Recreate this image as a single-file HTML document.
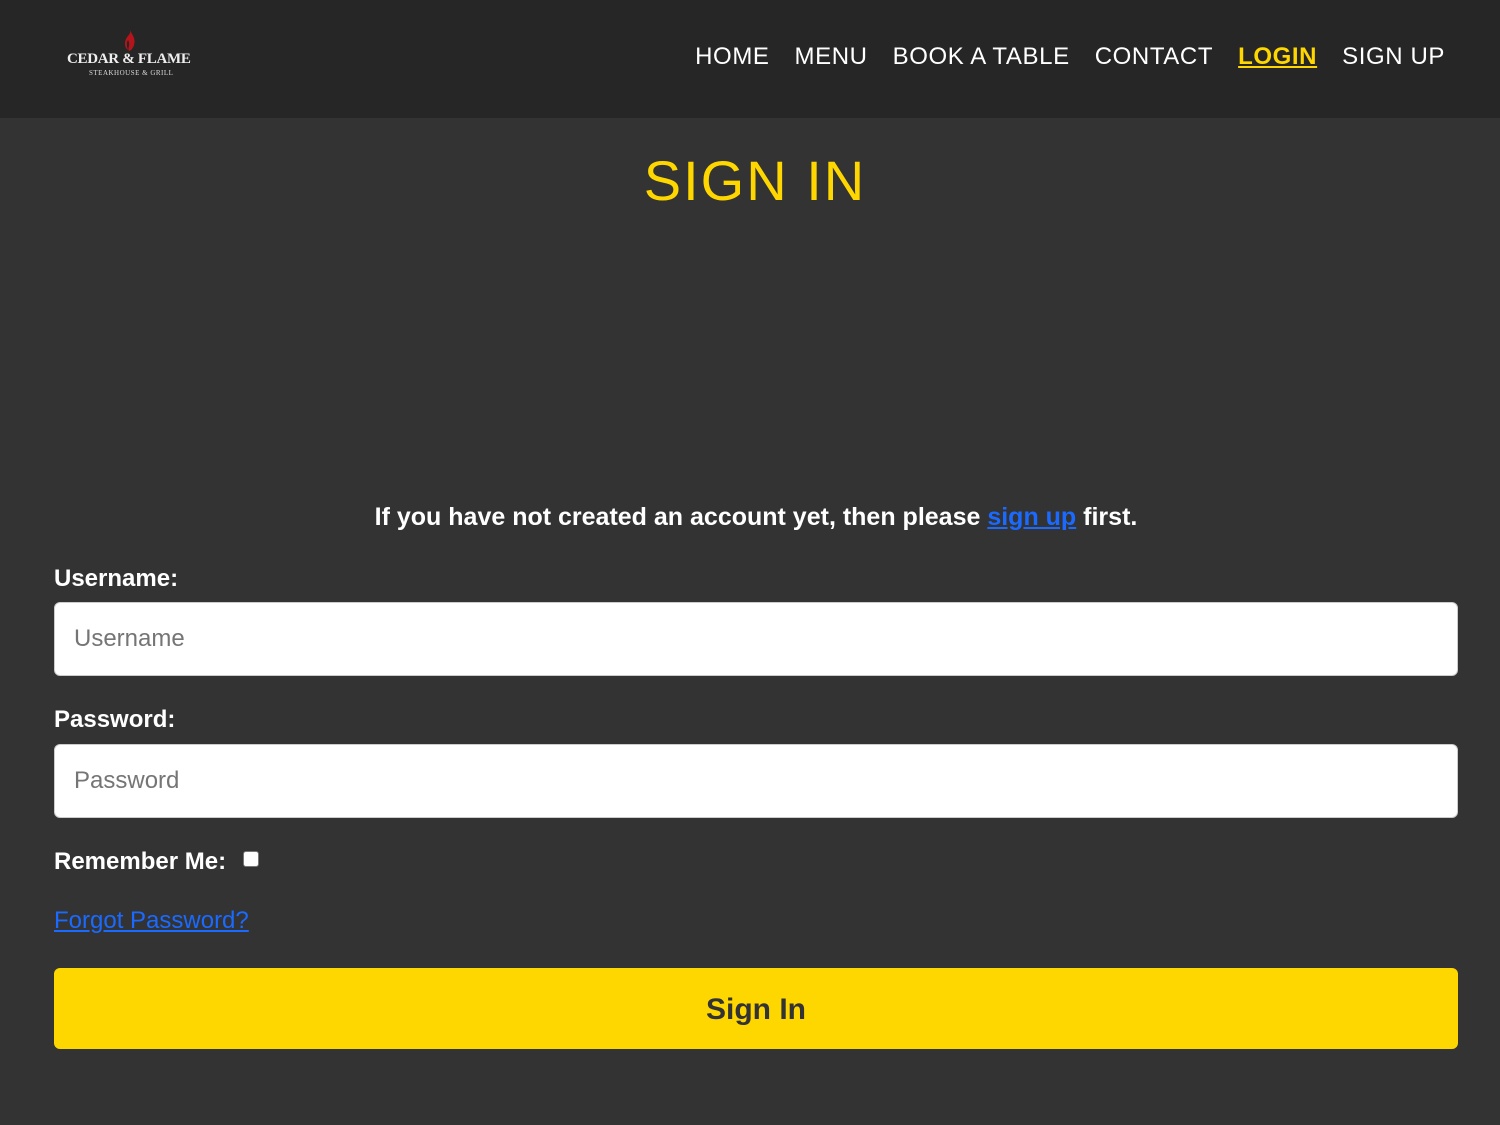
<!DOCTYPE html>
<html><head><style>
*{box-sizing:border-box;margin:0;padding:0}
body{width:1500px;height:1125px;background:#333;font-family:"Liberation Sans",sans-serif;color:#fff;position:relative;overflow:hidden}
.hdr{position:absolute;left:0;top:0;width:1500px;height:118px;background:#262626}
.nav{position:absolute;top:43px;right:55px;display:flex;gap:25px;font-size:24px;letter-spacing:0.6px}
.nav span{color:#fff}
.nav .act{color:#ffd700;text-decoration:underline;font-weight:bold}
.abs{position:absolute}
input.f{position:absolute;left:54px;width:1404px;height:74px;border:1px solid #ccc;border-radius:6px;background:#fff;font-size:24px;padding-left:19px;font-family:"Liberation Sans",sans-serif;color:#777}
.lbl{position:absolute;left:54px;font-size:24px;font-weight:bold}
</style></head><body>
<div class="hdr">
 <svg class="abs" style="left:122px;top:30px" width="16" height="22" viewBox="0 0 16 22"><path d="M8 0C10 5 14 8 12 15C11 19 8 21 7 21C5 18 9 15 6 10C4 13 5 17 6 20C3 18 2 14 4 9C6 5 9 4 8 0Z" fill="#b3151b"/></svg>
 <div class="abs" style="left:67px;top:51px;font-family:'Liberation Serif',serif;font-size:15px;font-weight:bold;color:#eee;letter-spacing:-0.3px">CEDAR &amp; FLAME</div>
 <div class="abs" style="left:89px;top:69px;font-family:'Liberation Serif',serif;font-size:7px;color:#ddd;letter-spacing:0.5px">STEAKHOUSE &amp; GRILL</div>
 <div class="nav"><span>HOME</span><span>MENU</span><span>BOOK A TABLE</span><span>CONTACT</span><span class="act">LOGIN</span><span>SIGN UP</span></div>
</div>
<div class="abs" style="left:0;width:1510px;top:148px;text-align:center;font-size:56px;color:#ffd700;letter-spacing:2px">SIGN IN</div>
<div class="abs" style="left:0;width:1512px;top:503px;text-align:center;font-size:25px;font-weight:bold">If you have not created an account yet, then please <span style="color:#1a6aff;text-decoration:underline">sign up</span> first.</div>
<div class="lbl" style="top:565px">Username:</div>
<input class="f" style="top:602px" placeholder="Username">
<div class="lbl" style="top:706px">Password:</div>
<input class="f" style="top:744px" placeholder="Password">
<div class="lbl" style="top:848px">Remember Me:</div>
<div class="abs" style="left:243px;top:851px;width:16px;height:16px;background:#fff;border:1px solid #777;border-radius:3px"></div>
<div class="abs" style="left:54px;top:907px;font-size:24px;color:#1a6aff;text-decoration:underline">Forgot Password?</div>
<div class="abs" style="left:54px;top:968px;width:1404px;height:81px;background:#ffd700;border-radius:6px;text-align:center;line-height:83px;font-size:30px;font-weight:bold;color:#333">Sign In</div>
</body></html>
